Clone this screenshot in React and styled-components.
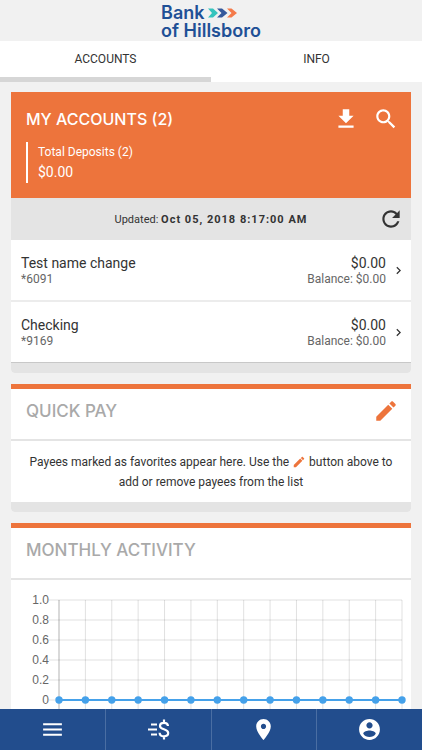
import React from 'react';
import styled, { createGlobalStyle } from 'styled-components';

const accountList = [
  { name: 'Test name change', number: '*6091', amount: '$0.00', balance: 'Balance: $0.00' },
  { name: 'Checking', number: '*9169', amount: '$0.00', balance: 'Balance: $0.00' },
];

const activity = [0, 0, 0, 0, 0, 0, 0, 0, 0, 0, 0, 0, 0, 0];

const icons = {
  download: 'M19 9h-4V3H9v6H5l7 7 7-7zM5 18v2h14v-2H5z',
  search:
    'M15.5 14h-.79l-.28-.27C15.41 12.59 16 11.11 16 9.5 16 5.91 13.09 3 9.5 3S3 5.91 3 9.5 5.91 16 9.5 16c1.61 0 3.09-.59 4.23-1.57l.27.28v.79l5 4.99L20.49 19l-4.99-5zm-6 0C7.01 14 5 11.99 5 9.5S7.01 5 9.5 5 14 7.01 14 9.5 11.99 14 9.5 14z',
  refresh:
    'M17.65 6.35C16.2 4.9 14.21 4 12 4c-4.42 0-7.99 3.58-7.99 8s3.57 8 7.99 8c3.73 0 6.84-2.55 7.73-6h-2.08c-.82 2.33-3.04 4-5.65 4-3.31 0-6-2.69-6-6s2.69-6 6-6c1.66 0 3.14.69 4.22 1.78L13 11h7V4l-2.35 2.35z',
  edit: 'M3 17.25V21h3.75L17.81 9.94l-3.75-3.75L3 17.25zM20.71 7.04c.39-.39.39-1.02 0-1.41l-2.34-2.34c-.39-.39-1.02-.39-1.41 0l-1.83 1.83 3.75 3.75 1.83-1.83z',
  chevron: 'M10 6L8.59 7.41 13.17 12l-4.58 4.59L10 18l6-6z',
  menu: 'M3 18h18v-2H3v2zm0-5h18v-2H3v2zm0-7v2h18V6H3z',
  place:
    'M12 2C8.13 2 5 5.13 5 9c0 5.25 7 13 7 13s7-7.75 7-13c0-3.87-3.13-7-7-7zm0 9.5c-1.38 0-2.5-1.12-2.5-2.5s1.12-2.5 2.5-2.5 2.5 1.12 2.5 2.5-1.12 2.5-2.5 2.5z',
  account:
    'M12 2C6.48 2 2 6.48 2 12s4.48 10 10 10 10-4.48 10-10S17.52 2 12 2zm0 3c1.66 0 3 1.34 3 3s-1.34 3-3 3-3-1.34-3-3 1.34-3 3-3zm0 14.2c-2.5 0-4.71-1.28-6-3.22.03-1.99 4-3.08 6-3.08 1.99 0 5.97 1.09 6 3.08-1.29 1.94-3.5 3.22-6 3.22z',
};

export default function App() {
  return (
    <>
      <GlobalStyle />
      <Page>
        <Header>
          <Logo>
            <LogoLine>
              Bank
              <LogoArrows />
            </LogoLine>
            <LogoLine>of Hillsboro</LogoLine>
          </Logo>
        </Header>
        <TabList role="tablist">
          <Tab role="tab" aria-selected="true" $active>
            ACCOUNTS
          </Tab>
          <Tab role="tab" aria-selected="false">
            INFO
          </Tab>
        </TabList>
        <Content>
          <AccountsCard />
          <QuickPayCard />
          <MonthlyActivityCard />
        </Content>
        <BottomNav />
      </Page>
    </>
  );
}

const Icon = ({ name, size = 26 }) => (
  <svg width={size} height={size} viewBox="0 0 24 24" fill="currentColor" aria-hidden="true">
    <path d={icons[name]} />
  </svg>
);

const LogoArrows = () => (
  <svg width="30" height="12" viewBox="0 0 30 12" aria-hidden="true">
    <path d="M0 1.500h5l5 4.500-5 4.500H0l4-4.500z" fill="#35c4bd" />
    <path d="M9 1.500h5l5.500 4.500-5.500 4.500H9l4.500-4.500z" fill="#34589c" />
    <path d="M19 1.500h4.500l5.500 4.500-5.500 4.500H19l4.500-4.500z" fill="#f47a4a" />
  </svg>
);

const AccountsCard = () => (
  <Card>
    <AccountsHeader>
      <HeaderTop>
        <CardTitle $small>MY ACCOUNTS (2)</CardTitle>
        <Actions>
          <IconButton aria-label="Download">
            <Icon name="download" />
          </IconButton>
          <IconButton aria-label="Search">
            <Icon name="search" />
          </IconButton>
        </Actions>
      </HeaderTop>
      <Summary>
        <span>Total Deposits (2)</span>
        <SummaryAmount>$0.00</SummaryAmount>
      </Summary>
    </AccountsHeader>
    <UpdatedBar>
      <UpdatedText>
        Updated: <strong>Oct 05, 2018 8:17:00 AM</strong>
      </UpdatedText>
      <IconButton aria-label="Refresh">
        <Icon name="refresh" />
      </IconButton>
    </UpdatedBar>
    {accountList.map(({ name, number, amount, balance }) => (
      <AccountRow key={number} href="#">
        <AccountInfo>
          <AccountMain>{name}</AccountMain>
          <AccountSub>{number}</AccountSub>
        </AccountInfo>
        <AccountInfo $right>
          <AccountMain>{amount}</AccountMain>
          <AccountSub>{balance}</AccountSub>
        </AccountInfo>
        <Icon name="chevron" size={15} />
      </AccountRow>
    ))}
    <CardFooter $line />
  </Card>
);

const QuickPayCard = () => (
  <Card $accent>
    <CardHeader>
      <CardTitle>QUICK PAY</CardTitle>
      <IconButton $accent aria-label="Edit favorite payees">
        <Icon name="edit" />
      </IconButton>
    </CardHeader>
    <Message>
      Payees marked as favorites appear here. Use the{' '}
      <InlineIcon>
        <Icon name="edit" size={14} />
      </InlineIcon>{' '}
      button above to add or remove payees from the list
    </Message>
    <CardFooter />
  </Card>
);

const MonthlyActivityCard = () => (
  <Card $accent>
    <CardHeader>
      <CardTitle>MONTHLY ACTIVITY</CardTitle>
    </CardHeader>
    <ActivityChart />
    <CardFooter />
  </Card>
);

const ActivityChart = () => {
  const left = 48;
  const right = 391;
  const top = 20;
  const bottom = 120;
  const step = (right - left) / (activity.length - 1);
  const labels = ['1.0', '0.8', '0.6', '0.4', '0.2', '0'];
  const rowStep = (bottom - top) / (labels.length - 1);
  const points = activity.map((value, i) => [left + i * step, bottom - value * (bottom - top)]);

  return (
    <Chart viewBox="0 0 400 140" role="img" aria-label="Monthly activity">
      {labels.map((label, i) => (
        <g key={label}>
          <line x1={left - 10} x2={right} y1={top + i * rowStep} y2={top + i * rowStep} />
          <text x={left - 10} y={top + i * rowStep + 4}>
            {label}
          </text>
        </g>
      ))}
      {points.map(([x], i) => (
        <line key={`grid-${i}`} x1={x} x2={x} y1={top} y2={bottom + 10} strokeOpacity={i === 0 ? 0.3 : 0.12} />
      ))}
      <polyline points={points.map((p) => p.join(',')).join(' ')} />
      {points.map(([x, y], i) => (
        <circle key={`point-${i}`} cx={x} cy={y} r="3.7" />
      ))}
    </Chart>
  );
};

const BottomNav = () => (
  <Nav>
    <NavButton aria-label="Menu">
      <Icon name="menu" size={25} />
    </NavButton>
    <NavButton aria-label="Transfers">
      <svg width="25" height="25" viewBox="0 0 25 25" fill="none" stroke="currentColor" strokeWidth="2" aria-hidden="true">
        <path d="M5 7.500h6M2 12.500h9M5 17.500h6" />
        <path
          d="M22 9c-.2-2-1.700-3.200-4-3.200-2.400 0-4 1.200-4 3.100 0 4.400 8.200 2.400 8.200 7.200 0 2-1.700 3.200-4.200 3.200s-4.300-1.300-4.400-3.600M18 2.500v3M18 19.500v3"
          strokeWidth="2.2"
        />
      </svg>
    </NavButton>
    <NavButton aria-label="Locations">
      <Icon name="place" size={25} />
    </NavButton>
    <NavButton aria-label="Profile">
      <Icon name="account" size={25} />
    </NavButton>
  </Nav>
);

const GlobalStyle = createGlobalStyle`
  * {
    box-sizing: border-box;
  }

  body {
    margin: 0;
    background: #f1f1f1;
    color: #333;
    font-family: Roboto, 'Liberation Sans', sans-serif;
  }

  button {
    border: 0;
    padding: 0;
    background: none;
    color: inherit;
    font: inherit;
    cursor: pointer;
  }
`;

const Page = styled.div`
  display: flex;
  flex-direction: column;
  height: 100vh;
`;

const Header = styled.header`
  display: flex;
  justify-content: center;
  padding: 4px 0 1px;
`;

const Logo = styled.div`
  color: #1f5096;
  font-family: Inter, sans-serif;
  font-size: 18px;
  font-weight: 600;
  line-height: 18px;
`;

const LogoLine = styled.div`
  display: flex;
  align-items: center;
  gap: 3px;
`;

const TabList = styled.div`
  display: flex;
  flex-shrink: 0;
  background: #fff;
`;

const Tab = styled.button`
  flex: 1;
  && {
    padding: 10px 0 9px;
    border-bottom: 5px solid ${({ $active }) => ($active ? '#d6d6d6' : 'transparent')};
    font-size: 12px;
    line-height: 17px;
  }
`;

const Content = styled.main`
  display: flex;
  flex: 1;
  flex-direction: column;
  gap: 11px;
  min-height: 0;
  padding: 10px 11px;
  overflow-y: auto;
  scrollbar-width: none;
`;

const Card = styled.section`
  flex-shrink: 0;
  border-top: ${({ $accent }) => ($accent ? '5px solid #ed743c' : '0')};
  border-radius: 0 0 4px 4px;
  background: #fff;
  overflow: hidden;
`;

const AccountsHeader = styled.div`
  padding: 14px 12px 15px 15px;
  background: #ed743c;
  color: #fff;
`;

const HeaderTop = styled.div`
  display: flex;
  align-items: center;
  justify-content: space-between;
`;

const CardTitle = styled.h2`
  margin: 0;
  font-family: Inter, sans-serif;
  font-size: ${({ $small }) => ($small ? '16px' : '17px')};
  font-weight: 500;
  line-height: 22px;
`;

const Actions = styled.div`
  display: flex;
  gap: 14px;
`;

const IconButton = styled.button`
  && {
    display: flex;
    color: ${({ $accent }) => ($accent ? '#ed743c' : 'inherit')};
  }
`;

const Summary = styled.div`
  display: flex;
  flex-direction: column;
  margin-top: 10px;
  padding-left: 10px;
  border-left: 2px solid #fff;
  font-size: 12px;
  line-height: 20px;
`;

const SummaryAmount = styled.span`
  font-size: 14px;
  line-height: 21px;
`;

const UpdatedBar = styled.div`
  display: flex;
  align-items: center;
  padding: 8px 7px;
  background: #e4e4e4;
`;

const UpdatedText = styled.div`
  flex: 1;
  padding-left: 26px;
  font-size: 11px;
  text-align: center;

  strong {
    letter-spacing: 1px;
  }
`;

const AccountRow = styled.a`
  display: flex;
  align-items: center;
  padding: 14px 5px 13px 10px;
  color: #333;
  text-decoration: none;

  & + & {
    border-top: 2px solid #ececec;
  }
`;

const AccountInfo = styled.div`
  display: flex;
  flex: 1;
  flex-direction: column;
  margin-right: ${({ $right }) => ($right ? '5px' : '0')};
  text-align: ${({ $right }) => ($right ? 'right' : 'left')};
`;

const AccountMain = styled.span`
  font-size: 14px;
  line-height: 18px;
`;

const AccountSub = styled.span`
  color: #666;
  font-size: 12px;
  line-height: 15px;
`;

const CardFooter = styled.div`
  height: ${({ $line }) => ($line ? '11px' : '10px')};
  border-top: ${({ $line }) => ($line ? '1px solid #c8c8c8' : '0')};
  background: #e4e4e4;
`;

const CardHeader = styled.div`
  display: flex;
  align-items: center;
  justify-content: space-between;
  min-height: 52px;
  padding: 0 12px 6px 15px;
  border-bottom: 2px solid #e4e4e4;
  color: #a9a9a9;
`;

const Message = styled.p`
  margin: 0;
  padding: 11px 15px 10px;
  font-size: 12px;
  line-height: 20px;
  text-align: center;
`;

const InlineIcon = styled.span`
  color: #ed743c;

  svg {
    vertical-align: text-bottom;
  }
`;

const Chart = styled.svg`
  display: block;
  width: 100%;

  line {
    stroke: #000;
  }

  g line {
    stroke-opacity: 0.12;
  }

  text {
    fill: #666;
    font-family: 'Liberation Sans', sans-serif;
    font-size: 12px;
    text-anchor: end;
  }

  polyline {
    fill: none;
    stroke: #45a1ea;
    stroke-width: 2;
  }

  circle {
    fill: #45a1ea;
  }
`;

const Nav = styled.nav`
  display: flex;
  flex-shrink: 0;
  height: 41px;
  background: #224d8d;
  color: #fff;
`;

const NavButton = styled.button`
  && {
    display: flex;
    flex: 1;
    align-items: center;
    justify-content: center;
  }

  && + && {
    border-left: 1px solid #4a6ea3;
  }
`;
